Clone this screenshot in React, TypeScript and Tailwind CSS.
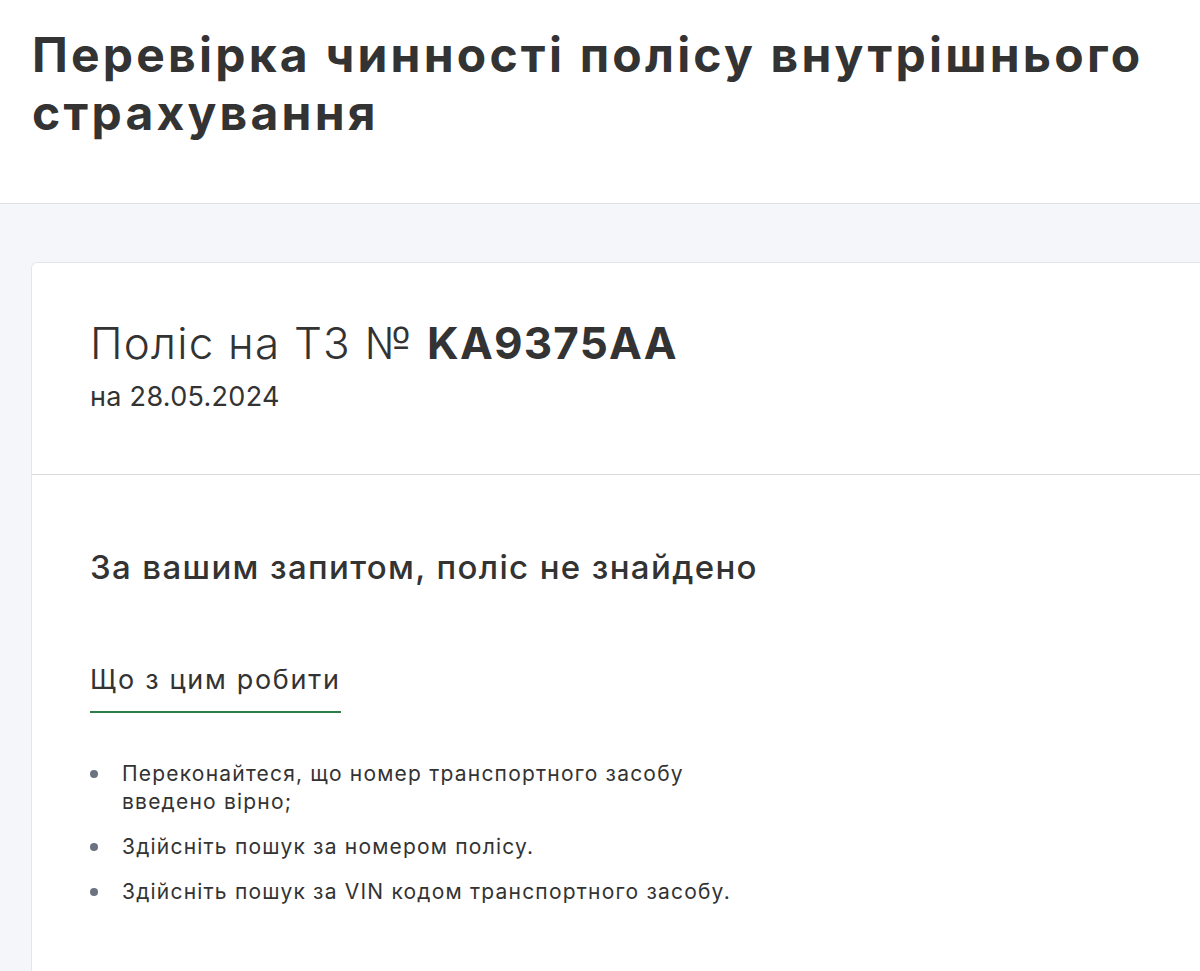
export default function App() {
  const tips = [
    'Переконайтеся, що номер транспортного засобу введено вірно;',
    'Здійсніть пошук за номером полісу.',
    'Здійсніть пошук за VIN кодом транспортного засобу.',
  ];

  return (
    <main className="min-h-screen bg-[#f5f6fa] text-[#333333] font-['Inter','Noto_Sans',sans-serif] overflow-hidden">
      <header className="bg-white border-b border-[#dedfe3] px-8 pt-[26px] pb-[61px]">
        <h1 className="text-[48px] font-bold leading-[58px] tracking-[3.2px]">
          Перевірка чинності полісу внутрішнього страхування
        </h1>
      </header>

      <section className="pl-[31px] pt-[58px]">
        <div className="bg-white border-l border-t border-[#e3e6ec] rounded-tl-md min-h-[720px]">
          <div className="px-[58px] pt-[52px] pb-[60px] border-b border-[#d9d9d9]">
            <h2 className="text-[44px] font-light leading-[56px] tracking-[1.2px]">
              Поліс на ТЗ № <span className="font-bold">KA9375AA</span>
            </h2>
            <p className="text-[27px] font-normal leading-[34px] tracking-[0.3px] mt-[9px]">на 28.05.2024</p>
          </div>

          <div className="px-[58px] pt-[72px]">
            <h3 className="text-[33px] font-medium leading-[40px] tracking-[1.35px]">
              За вашим запитом, поліс не знайдено
            </h3>

            <div className="mt-[76px] inline-block border-b-2 border-[#2f7d4a] pb-[14px]">
              <span className="text-[27px] leading-[34px] tracking-[1.7px]">Що з цим робити</span>
            </div>

            <ul className="mt-[47px] flex flex-col gap-[17px]">
              {tips.map((t) => (
                <li key={t} className="flex items-start gap-[24px] text-[21px] leading-[28px] tracking-[1.2px]">
                  <span className="mt-[10px] w-[8px] h-[8px] rounded-full bg-[#6b7280] shrink-0" />
                  <span className="max-w-[610px]">{t}</span>
                </li>
              ))}
            </ul>
          </div>
        </div>
      </section>
    </main>
  );
}
